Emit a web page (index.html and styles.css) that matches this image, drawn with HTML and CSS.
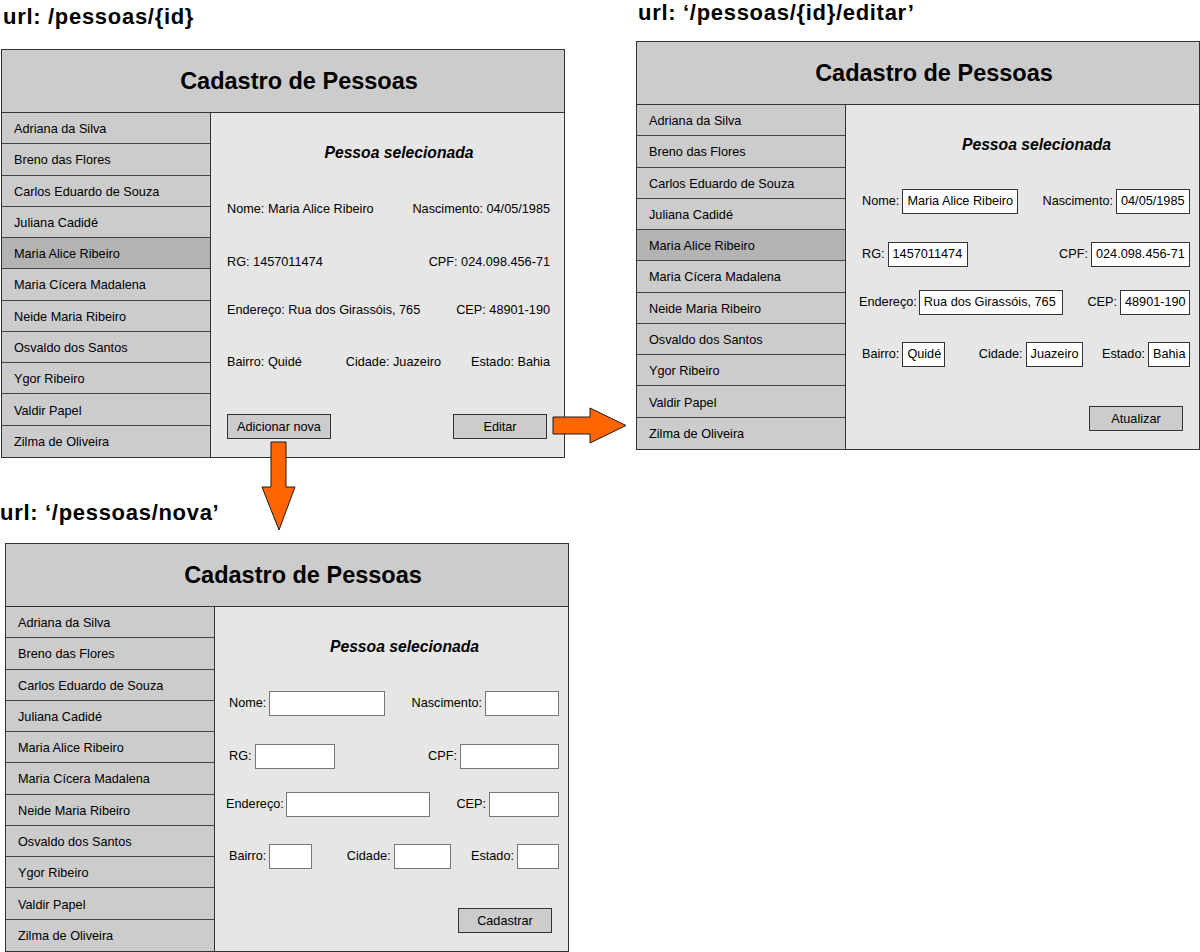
FILE: index.html
```html
<!DOCTYPE html>
<html lang="pt-BR">
<head>
    <meta charset="UTF-8">
    <meta name="viewport" content="width=device-width, initial-scale=1.0">
    <link rel="stylesheet" href="styles.css">
    <title>Cadastro de Pessoas - telas</title>
</head>
<body>
<main class="board">

    <section class="screen screen-show">
        <h2 class="url">url: /pessoas/{id}</h2>
        <div class="panel view">
            <header class="panel-head">Cadastro de Pessoas</header>
            <div class="panel-body">
                <ul class="people">
                    <li>Adriana da Silva</li>
                    <li>Breno das Flores</li>
                    <li>Carlos Eduardo de Souza</li>
                    <li>Juliana Cadidé</li>
                    <li class="selected">Maria Alice Ribeiro</li>
                    <li>Maria Cícera Madalena</li>
                    <li>Neide Maria Ribeiro</li>
                    <li>Osvaldo dos Santos</li>
                    <li>Ygor Ribeiro</li>
                    <li>Valdir Papel</li>
                    <li>Zilma de Oliveira</li>
                </ul>
                <div class="details">
                    <h3>Pessoa selecionada</h3>
                    <div class="row"><span>Nome: Maria Alice Ribeiro</span><span>Nascimento: 04/05/1985</span></div>
                    <div class="row"><span>RG: 1457011474</span><span>CPF: 024.098.456-71</span></div>
                    <div class="row"><span>Endereço: Rua dos Girassóis, 765</span><span>CEP: 48901-190</span></div>
                    <div class="row"><span>Bairro: Quidé</span><span class="mid">Cidade: Juazeiro</span><span>Estado: Bahia</span></div>
                    <div class="actions">
                        <button>Adicionar nova</button>
                        <button>Editar</button>
                    </div>
                </div>
            </div>
        </div>
    </section>

    <section class="screen screen-edit">
        <h2 class="url">url: ‘/pessoas/{id}/editar’</h2>
        <div class="panel form">
            <header class="panel-head">Cadastro de Pessoas</header>
            <div class="panel-body">
                <ul class="people">
                    <li>Adriana da Silva</li>
                    <li>Breno das Flores</li>
                    <li>Carlos Eduardo de Souza</li>
                    <li>Juliana Cadidé</li>
                    <li class="selected">Maria Alice Ribeiro</li>
                    <li>Maria Cícera Madalena</li>
                    <li>Neide Maria Ribeiro</li>
                    <li>Osvaldo dos Santos</li>
                    <li>Ygor Ribeiro</li>
                    <li>Valdir Papel</li>
                    <li>Zilma de Oliveira</li>
                </ul>
                <div class="details">
                    <h3>Pessoa selecionada</h3>
                    <div class="row">
                        <label class="field">Nome:<span class="box w-nome">Maria Alice Ribeiro</span></label>
                        <label class="field">Nascimento:<span class="box w-nasc">04/05/1985</span></label>
                    </div>
                    <div class="row">
                        <label class="field">RG:<span class="box w-rg">1457011474</span></label>
                        <label class="field">CPF:<span class="box w-cpf">024.098.456-71</span></label>
                    </div>
                    <div class="row">
                        <label class="field wide">Endereço:<span class="box w-end">Rua dos Girassóis, 765</span></label>
                        <label class="field">CEP:<span class="box w-cep">48901-190</span></label>
                    </div>
                    <div class="row">
                        <label class="field">Bairro:<span class="box w-bairro">Quidé</span></label>
                        <label class="field mid">Cidade:<span class="box w-cidade">Juazeiro</span></label>
                        <label class="field">Estado:<span class="box w-estado">Bahia</span></label>
                    </div>
                    <div class="actions">
                        <button>Atualizar</button>
                    </div>
                </div>
            </div>
        </div>
    </section>

    <section class="screen screen-new">
        <h2 class="url">url: ‘/pessoas/nova’</h2>
        <div class="panel form empty">
            <header class="panel-head">Cadastro de Pessoas</header>
            <div class="panel-body">
                <ul class="people">
                    <li>Adriana da Silva</li>
                    <li>Breno das Flores</li>
                    <li>Carlos Eduardo de Souza</li>
                    <li>Juliana Cadidé</li>
                    <li>Maria Alice Ribeiro</li>
                    <li>Maria Cícera Madalena</li>
                    <li>Neide Maria Ribeiro</li>
                    <li>Osvaldo dos Santos</li>
                    <li>Ygor Ribeiro</li>
                    <li>Valdir Papel</li>
                    <li>Zilma de Oliveira</li>
                </ul>
                <div class="details">
                    <h3>Pessoa selecionada</h3>
                    <div class="row">
                        <label class="field">Nome:<span class="box w-nome"></span></label>
                        <label class="field">Nascimento:<span class="box w-nasc"></span></label>
                    </div>
                    <div class="row">
                        <label class="field">RG:<span class="box w-rg"></span></label>
                        <label class="field">CPF:<span class="box w-cpf"></span></label>
                    </div>
                    <div class="row">
                        <label class="field wide">Endereço:<span class="box w-end"></span></label>
                        <label class="field">CEP:<span class="box w-cep"></span></label>
                    </div>
                    <div class="row">
                        <label class="field">Bairro:<span class="box w-bairro"></span></label>
                        <label class="field mid">Cidade:<span class="box w-cidade"></span></label>
                        <label class="field">Estado:<span class="box w-estado"></span></label>
                    </div>
                    <div class="actions">
                        <button>Cadastrar</button>
                    </div>
                </div>
            </div>
        </div>
    </section>

    <!-- setas do fluxo entre as telas -->
    <svg class="arrows" width="1200" height="952" viewBox="0 0 1200 952">
        <polygon points="553,417 590,417 590,408 626,425.5 590,443 590,434 553,434" />
        <polygon points="271,442 286,442 286,487 295,487 279,530 262,487 271,487" />
    </svg>

</main>
</body>
</html>
```

FILE: styles.css
```css
* {
  margin: 0;
  padding: 0;
  box-sizing: border-box;
}

body {
  font-family: "Liberation Sans", Arial, sans-serif;
  color: #000;
  background-color: #fff;
}

.board {
  position: relative;
  width: 1200px;
  height: 952px;
  overflow: hidden;
}

.screen {
  position: absolute;
}

.screen-show {
  left: 1px;
  top: 5px;
}

.screen-edit {
  left: 636px;
  top: 1px;
}

.screen-new {
  left: 0;
  top: 501px;
}

.url {
  font-size: 22px;
  line-height: 24px;
  letter-spacing: 0.7px;
  font-weight: bold;
  white-space: nowrap;
}

.screen-show .url,
.screen-edit .url {
  margin-left: 2px;
}

.screen-show .panel { margin-top: 20px; }
.screen-edit .panel { margin-top: 16px; }
.screen-new .panel { margin: 18px 0 0 5px; }

.panel {
  width: 564px;
  height: 409px;
  border: 1px solid #333;
  display: flex;
  flex-direction: column;
}

.panel-head {
  height: 63px;
  flex: none;
  background-color: #ccc;
  border-bottom: 1px solid #333;
  display: flex;
  align-items: center;
  justify-content: center;
  padding-left: 32px;
  font-size: 23.5px;
  font-weight: bold;
}

.panel-body {
  flex: 1;
  display: flex;
  min-height: 0;
}

.people {
  list-style: none;
  width: 209px;
  flex: none;
  border-right: 1px solid #333;
  display: grid;
  grid-template-rows: repeat(11, 1fr);
}

.people li {
  background-color: #ccc;
  border-bottom: 1px solid #444;
  padding: 2px 0 0 12px;
  display: flex;
  align-items: center;
  font-size: 12.7px;
}

.people li:last-child {
  border-bottom: 0;
}

.people li.selected {
  background-color: #b3b3b3;
}

.details {
  flex: 1;
  background-color: #e6e6e6;
  display: flex;
  flex-direction: column;
  padding: 0 9px 0 16px;
  font-size: 12.7px;
}

.view .details {
  padding-right: 14px;
}

.empty .details {
  padding-left: 14px;
}

.details h3 {
  margin-top: 30px;
  padding-left: 21px;
  line-height: 20px;
  text-align: center;
  font-size: 15.7px;
  font-weight: bold;
  font-style: italic;
}

.row {
  height: 26px;
  display: flex;
  align-items: center;
  justify-content: space-between;
  white-space: nowrap;
}

.row:nth-of-type(1) { margin-top: 33px; }
.row:nth-of-type(2) { margin-top: 27px; }
.row:nth-of-type(3) { margin-top: 22px; }
.row:nth-of-type(4) { margin-top: 26px; }

.row .mid {
  margin-left: 14px;
}

.field {
  display: flex;
  align-items: center;
  gap: 3px;
}

.field.wide {
  margin-left: -3px;
  gap: 2px;
}

.box {
  height: 25px;
  background-color: #fff;
  border: 1px solid #333;
  padding: 0 4px;
  display: flex;
  align-items: center;
}

.empty .box {
  border-color: #777;
}

.w-nome { width: 116px; }
.w-nasc { width: 74px; }
.w-rg { width: 80px; }
.w-cpf { width: 99px; }
.w-end { width: 144px; }
.w-cep { width: 70px; }
.w-bairro { width: 43px; }
.w-cidade { width: 57px; }
.w-estado { width: 42px; }

.actions {
  margin-top: 39px;
  display: flex;
  justify-content: flex-end;
  padding-right: 7px;
}

.view .actions {
  justify-content: space-between;
  padding-right: 3px;
}

.actions button {
  height: 25px;
  min-width: 94px;
  padding: 0 9px;
  background-color: #ccc;
  border: 1px solid #333;
  font-family: inherit;
  font-size: 12.7px;
  color: #000;
}

.arrows {
  position: absolute;
  left: 0;
  top: 0;
  pointer-events: none;
}

.arrows polygon {
  fill: #ff6600;
  stroke: #1a1a1a;
  stroke-width: 1;
}
```
